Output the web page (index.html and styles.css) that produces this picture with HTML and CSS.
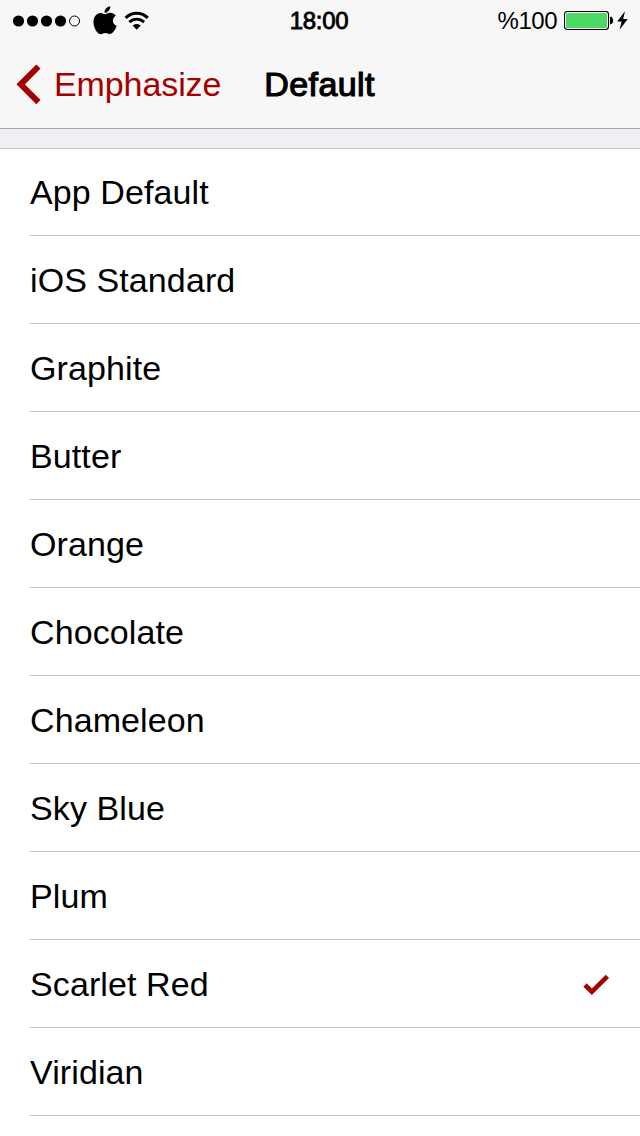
FILE: index.html
```html
<!DOCTYPE html>
<html lang="en">
<head>
    <meta charset="UTF-8">
    <meta name="viewport" content="width=device-width, initial-scale=1.0">
    <title>Default</title>
    <link rel="stylesheet" href="styles.css">
</head>
<body>
    <header class="header">
        <!-- Status bar -->
        <div class="status-bar">
            <div class="status-left">
                <svg class="signal" width="68" height="12" viewBox="0 0 68 12">
                    <circle cx="5.5" cy="6" r="5.6"/>
                    <circle cx="19.5" cy="6" r="5.6"/>
                    <circle cx="33.5" cy="6" r="5.6"/>
                    <circle cx="47.5" cy="6" r="5.6"/>
                    <circle cx="61.5" cy="6" r="5" fill="none" stroke="#000"/>
                </svg>
                <svg class="apple" width="24" height="29" viewBox="0 0 24 29">
                    <path d="M17.2 0.2C17.5 3.8 14.6 7 11.5 6.7C11.2 3.5 14 0.6 17.2 0.2Z"/>
                    <path d="M12.1 8.2C13.2 8.2 14.9 6.8 17.1 6.8C19.4 6.8 21.6 8 22.8 9.7C18.5 12.3 19.2 18.2 23.7 19.8C22.8 22.6 20.5 26.7 18 27.8C15.8 28.4 14.4 27 12.3 27C10.1 27 8.7 28.6 6.8 28C3.2 26.7 0.4 20.5 0.5 15.9C0.6 10.5 3.8 7 7.5 6.9C9.5 6.9 11.1 8.2 12.1 8.2Z"/>
                </svg>
                <svg class="wifi" width="26" height="20" viewBox="0 0 26 20">
                    <path d="M1.6 6.8C8 0.6 17.4 0.6 23.8 6.8" fill="none" stroke="#000" stroke-width="3"/>
                    <path d="M5.3 11.1C9.6 7.1 15.8 7.1 20.1 11.1" fill="none" stroke="#000" stroke-width="2.8"/>
                    <path d="M8.6 14.6C11 12.4 14.4 12.4 16.8 14.6L12.7 18.7Z"/>
                </svg>
            </div>
            <div class="time">18:00</div>
            <div class="status-right">
                <span class="percent">%100</span>
                <svg class="battery" width="50" height="20" viewBox="0 0 50 20">
                    <rect x="0.5" y="0.5" width="44" height="18" rx="3" fill="#fff" stroke="#000" stroke-width="1.1"/>
                    <rect x="2" y="2" width="41" height="15" rx="1.5" fill="#4cd964"/>
                    <path d="M46 5.8H47C49.8 6.8 49.8 12.2 47 13.2H46Z"/>
                </svg>
                <svg class="bolt" width="11" height="20" viewBox="0 0 11 20">
                    <path d="M8 0.2L0.2 10.5H4.6L2.6 18.8L10.8 8H6.2Z"/>
                </svg>
            </div>
        </div>

        <!-- Navigation bar -->
        <nav class="nav-bar">
            <a class="back" href="#">
                <svg width="26" height="42" viewBox="0 0 26 42">
                    <path d="M22.4 3.5L4.7 21.3L22.4 39.1" fill="none" stroke="#a40000" stroke-width="6"/>
                </svg>
                <span>Emphasize</span>
            </a>
            <h1 class="title">Default</h1>
        </nav>
    </header>

    <!-- Color list -->
    <ul class="list">
        <li class="list-item">App Default</li>
        <li class="list-item">iOS Standard</li>
        <li class="list-item">Graphite</li>
        <li class="list-item">Butter</li>
        <li class="list-item">Orange</li>
        <li class="list-item">Chocolate</li>
        <li class="list-item">Chameleon</li>
        <li class="list-item">Sky Blue</li>
        <li class="list-item">Plum</li>
        <li class="list-item selected">
            <span>Scarlet Red</span>
            <svg width="26" height="22" viewBox="0 0 26 22">
                <path d="M2 11L8.9 17.7L24.4 2.3" fill="none" stroke="#a40000" stroke-width="4.6"/>
            </svg>
        </li>
        <li class="list-item">Viridian</li>
    </ul>
</body>
</html>
```
FILE: styles.css
```css
* {
    box-sizing: border-box;
}
body {
    font-family: "Helvetica Neue", "Liberation Sans", Arial, sans-serif;
    background-color: #fff;
    color: #000;
    margin: 0;
    height: 1136px;
    overflow: hidden;
}
svg {
    display: block;
    flex: none;
}

/* Header */
.header {
    height: 129px;
    background-color: #f7f7f7;
    border-bottom: 1px solid #a7a7aa;
}
.status-bar {
    display: grid;
    grid-template-columns: 1fr auto 1fr;
    align-items: center;
    height: 41px;
    padding: 0 12px 0 13px;
    font-size: 24px;
    line-height: 41px;
}
.status-left,
.status-right {
    display: flex;
    align-items: center;
}
.status-right {
    justify-content: flex-end;
}
.apple {
    margin-left: 12px;
}
.wifi {
    margin-left: 7px;
}
.time {
    letter-spacing: -0.3px;
    margin-right: 3px;
    -webkit-text-stroke: 0.8px #000;
}
.percent {
    letter-spacing: -0.5px;
    margin-right: 7px;
}
.bolt {
    margin-left: 3px;
}

/* Navigation bar */
.nav-bar {
    display: flex;
    align-items: center;
    height: 86px;
    padding-left: 16px;
    font-size: 34px;
}
.back {
    display: flex;
    align-items: center;
    color: #a40000;
    text-decoration: none;
}
.back span {
    margin-left: 12px;
    letter-spacing: -0.1px;
}
.title {
    margin: 0 0 0 43px;
    font-size: 34px;
    font-weight: normal;
    letter-spacing: 0.4px;
    -webkit-text-stroke: 1.2px #000;
}

/* List */
.list {
    list-style: none;
    margin: 0;
    padding: 0 0 0 30px;
    border-top: 19px solid #efeff4;
    box-shadow: inset 0 1px 0 #c8c7cc;
}
.list-item {
    display: flex;
    align-items: center;
    justify-content: space-between;
    height: 88px;
    padding: 2px 31px 0 0;
    border-bottom: 1px solid #c8c7cc;
    font-size: 34px;
    letter-spacing: 0.1px;
}
```
